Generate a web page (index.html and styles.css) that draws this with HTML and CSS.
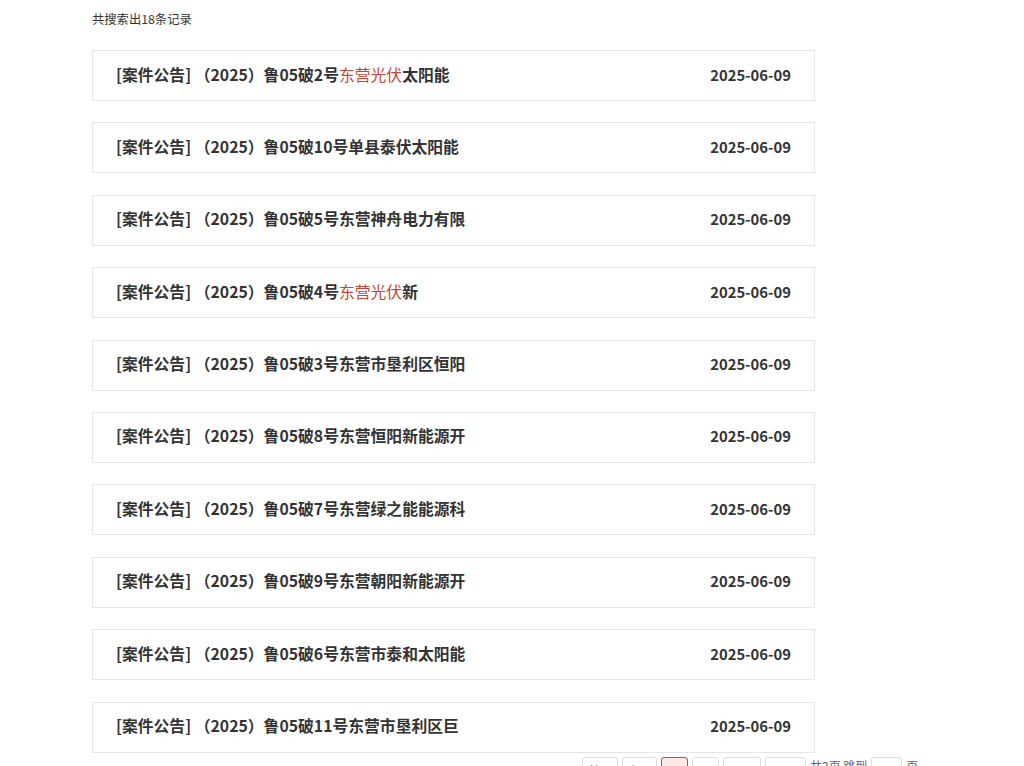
FILE: index.html
```html
<!DOCTYPE html>
<html lang="zh-CN">
<head>
    <meta charset="UTF-8">
    <title>搜索结果</title>
    <link rel="stylesheet" href="styles.css">
</head>
<body>
    <div class="main">
        <p class="total">共搜索出18条记录</p>

        <ul class="result-list">
            <li class="item"><span class="title">[案件公告] （2025）鲁05破2号<em>东营光伏</em>太阳能</span><span class="date">2025-06-09</span></li>
            <li class="item"><span class="title">[案件公告] （2025）鲁05破10号单县泰伏太阳能</span><span class="date">2025-06-09</span></li>
            <li class="item"><span class="title">[案件公告] （2025）鲁05破5号东营神舟电力有限</span><span class="date">2025-06-09</span></li>
            <li class="item"><span class="title">[案件公告] （2025）鲁05破4号<em>东营光伏</em>新</span><span class="date">2025-06-09</span></li>
            <li class="item"><span class="title">[案件公告] （2025）鲁05破3号东营市垦利区恒阳</span><span class="date">2025-06-09</span></li>
            <li class="item"><span class="title">[案件公告] （2025）鲁05破8号东营恒阳新能源开</span><span class="date">2025-06-09</span></li>
            <li class="item"><span class="title">[案件公告] （2025）鲁05破7号东营绿之能能源科</span><span class="date">2025-06-09</span></li>
            <li class="item"><span class="title">[案件公告] （2025）鲁05破9号东营朝阳新能源开</span><span class="date">2025-06-09</span></li>
            <li class="item"><span class="title">[案件公告] （2025）鲁05破6号东营市泰和太阳能</span><span class="date">2025-06-09</span></li>
            <li class="item"><span class="title">[案件公告] （2025）鲁05破11号东营市垦利区巨</span><span class="date">2025-06-09</span></li>
        </ul>

        <div class="pager">
            <a class="btn w36">首页</a>
            <a class="btn w34">上页</a>
            <a class="btn num active">1</a>
            <a class="btn num">2</a>
            <a class="btn w38">下一页</a>
            <a class="btn w41">尾页</a>
            <span class="info">共2页 跳到</span>
            <input class="jump" type="text" value="2">
            <span class="info">页</span>
        </div>
    </div>
</body>
</html>
```

FILE: styles.css
```css
body {
    margin: 0;
    background: #fff;
    color: #333;
    font-family: "Noto Sans CJK SC", "Noto Sans", sans-serif;
}

.main {
    padding-left: 92px;
    width: 723px;
}

.total {
    margin: 0;
    padding-top: 10px;
    height: 40px;
    font-size: 12.3px;
    line-height: 18px;
    color: #333;
}

.result-list {
    list-style: none;
    margin: 0;
    padding: 0;
}

.item {
    display: flex;
    justify-content: space-between;
    align-items: center;
    height: 46px;
    padding: 0 23px 3px;
    border: 1px solid #e6e6e6;
    margin-bottom: 21.4px;
}

.item:last-child {
    margin-bottom: 0;
}

.title {
    font-size: 15.8px;
    font-weight: bold;
    color: #333;
}

.title em {
    font-style: normal;
    color: #c9453a;
    font-weight: normal;
}

.date {
    font-size: 14.8px;
    font-weight: bold;
    color: #333;
}

.pager {
    display: flex;
    align-items: flex-start;
    gap: 4px;
    margin-top: 4px;
    margin-left: 490px;
    width: 340px;
    font-size: 12px;
}

.btn {
    display: block;
    box-sizing: border-box;
    height: 28px;
    line-height: 26px;
    border: 1px solid #ddd;
    border-radius: 3px;
    text-align: center;
    color: #666;
    flex: none;
}

.w36 { width: 36px; }
.w34 { width: 35px; }
.w38 { width: 38px; }
.w41 { width: 41px; }

.num {
    width: 27px;
}

.btn.active {
    background: #fbe9e7;
    border-color: #c9453a;
    color: #c9453a;
}

.info {
    color: #666;
    flex: none;
    line-height: 12px;
    padding-top: 3px;
}

.jump {
    box-sizing: border-box;
    width: 31px;
    height: 28px;
    border: 1px solid #ddd;
    border-radius: 3px;
    text-align: center;
    font-size: 12px;
    color: #666;
    padding: 0;
}
```
